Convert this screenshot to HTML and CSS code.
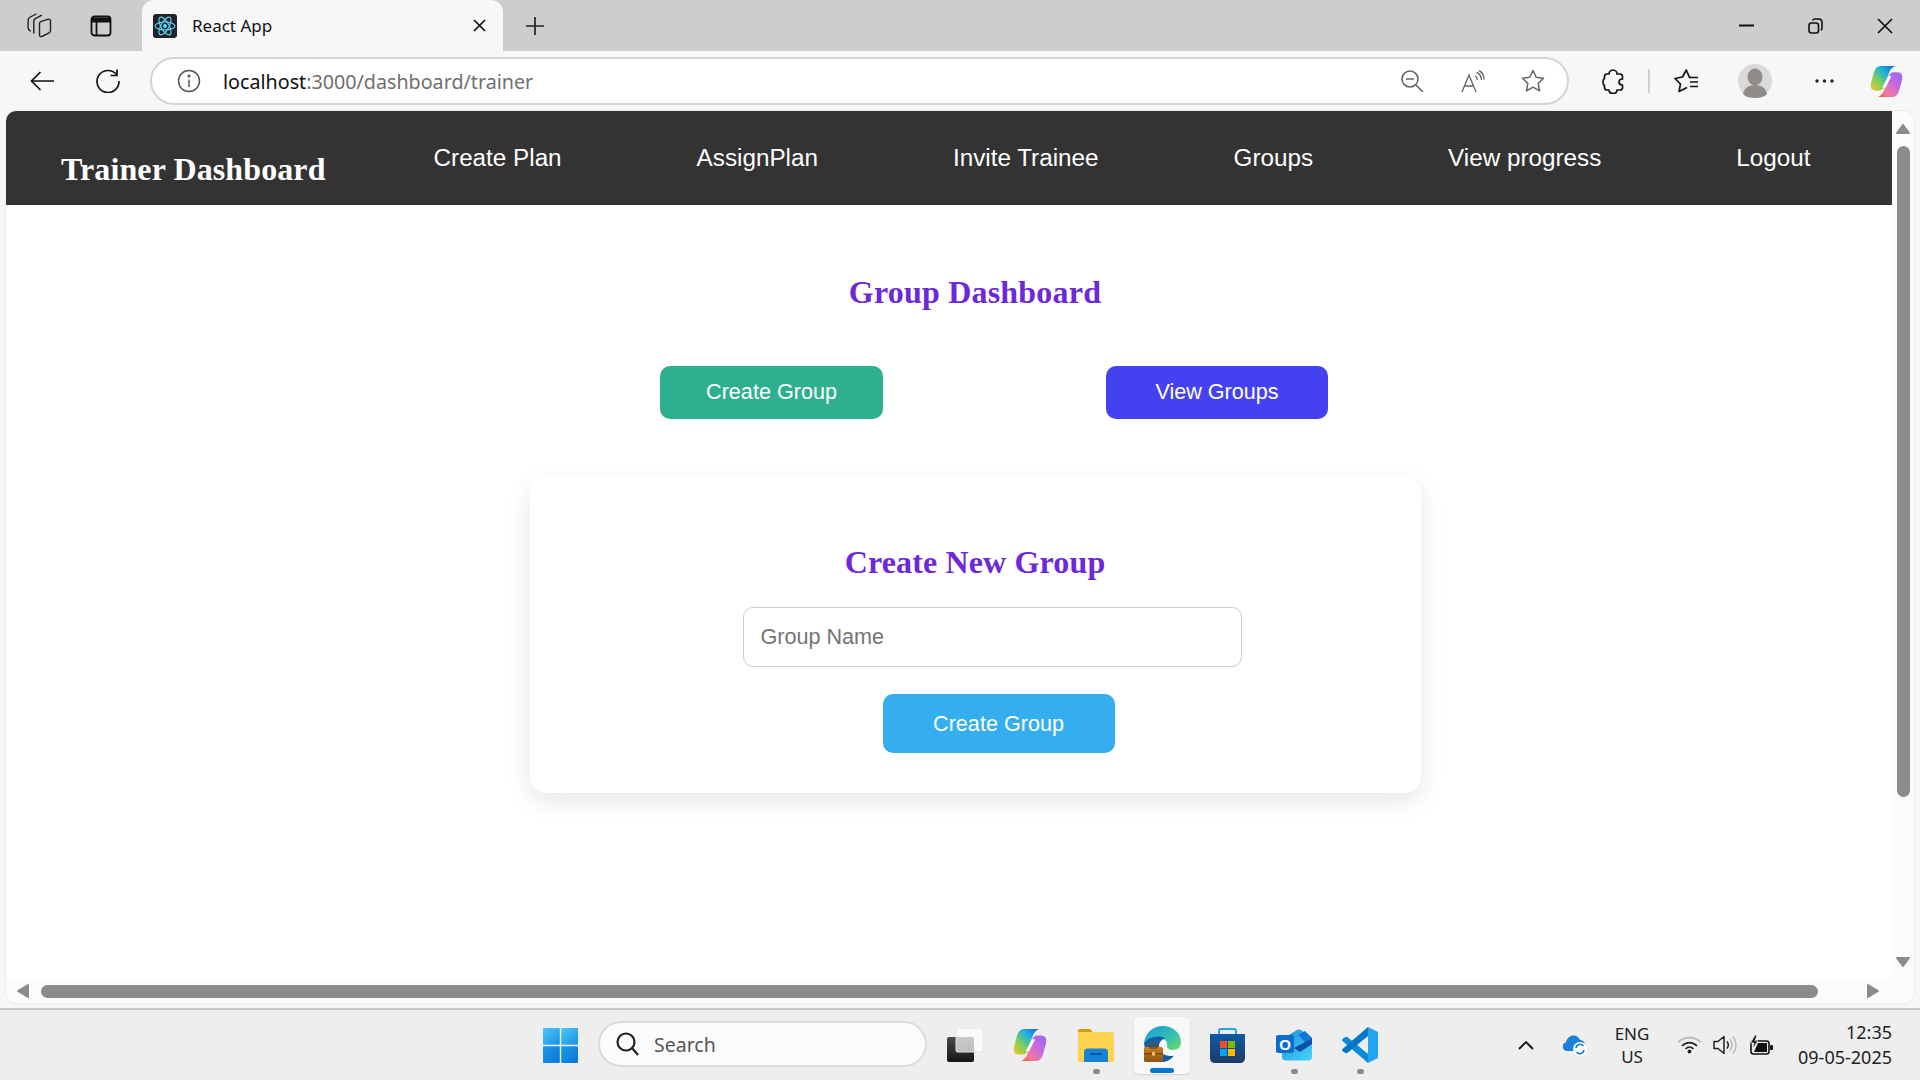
FILE: index.html
```html
<!DOCTYPE html>
<html lang="en">
<head>
<meta charset="utf-8">
<title>React App</title>
<link rel="stylesheet" href="styles.css">
</head>
<body>
<svg class="defs" width="0" height="0"><defs>
  <linearGradient id="c1" x1="1" y1="0" x2="0" y2="1"><stop offset="0" stop-color="#1a5fe8"/><stop offset=".35" stop-color="#1fb2dc"/><stop offset=".65" stop-color="#7fd05a"/><stop offset="1" stop-color="#f6c22a"/></linearGradient>
  <linearGradient id="c2" x1="1" y1="0" x2="0" y2="1"><stop offset="0" stop-color="#8f6cf2"/><stop offset=".4" stop-color="#c868e0"/><stop offset=".75" stop-color="#f27a9a"/><stop offset="1" stop-color="#f4552f"/></linearGradient>
  <linearGradient id="w1" x1="0" y1="0" x2="1" y2="1"><stop offset="0" stop-color="#4fc6f8"/><stop offset="1" stop-color="#1492e6"/></linearGradient>
  <linearGradient id="w2" x1="0" y1="0" x2="1" y2="1"><stop offset="0" stop-color="#1a9cea"/><stop offset="1" stop-color="#0a74d4"/></linearGradient>
  <linearGradient id="tv" x1="0" y1="0" x2="0" y2="1"><stop offset="0" stop-color="#4a4a4a"/><stop offset="1" stop-color="#161616"/></linearGradient>
  <linearGradient id="e1" x1="0" y1="0" x2="1" y2="1"><stop offset="0" stop-color="#1399d8"/><stop offset=".6" stop-color="#35c1b0"/><stop offset="1" stop-color="#6cdc5c"/></linearGradient>
  <linearGradient id="st" x1="0" y1="0" x2="0" y2="1"><stop offset="0" stop-color="#0f5aa2"/><stop offset="1" stop-color="#213a68"/></linearGradient>
  <linearGradient id="ol" x1="0" y1="0" x2="1" y2="1"><stop offset="0" stop-color="#1c8fe0"/><stop offset="1" stop-color="#45d4f8"/></linearGradient>
  <linearGradient id="br" x1="0" y1="0" x2="0" y2="1"><stop offset="0" stop-color="#c77f22"/><stop offset="1" stop-color="#8f5412"/></linearGradient>
</defs></svg>
<div class="screen">
  <header class="tabstrip">
    <div class="slot-tab">
      <svg width="25" height="25" viewBox="0 0 25 25" fill="none" stroke="#222" stroke-width="1.400" stroke-linejoin="round" stroke-linecap="round"><path d="M9 1L2.500 4.500C1.800 5 1.300 5.800 1.200 7L1 14c0 1.500.8 3 2.300 4"/><path d="M14.300 2.300L8 5.800C7.200 6.300 6.800 7 6.800 8v12"/><path d="M12.500 10.500c0-.8.500-1.500 1.300-1.800l7.500-2.500c1.100-.3 2.200.5 2.200 1.600v10c0 .9-.5 1.600-1.300 2L14.800 23.500c-1.100.5-2.300-.3-2.300-1.500z"/></svg>
    </div>
    <div class="slot-tab">
      <svg width="22" height="22" viewBox="0 0 22 22" fill="none" stroke="#111" stroke-width="1.800"><rect x="1.500" y="1.500" width="19" height="19" rx="3"/><path d="M1.500 5h19" stroke-width="5"/><path d="M6.500 7v13"/></svg>
    </div>
    <div class="tab">
      <svg class="favicon" width="24" height="24" viewBox="0 0 24 24"><rect width="24" height="24" rx="3" fill="#20232a"/><g fill="none" stroke="#61dafb" stroke-width="1.100"><ellipse cx="12" cy="12" rx="10" ry="4"/><ellipse cx="12" cy="12" rx="10" ry="4" transform="rotate(60 12 12)"/><ellipse cx="12" cy="12" rx="10" ry="4" transform="rotate(120 12 12)"/></g><circle cx="12" cy="12" r="2" fill="#61dafb"/></svg>
      <span class="tab-title">React App</span>
      <svg class="tab-close" width="13" height="13" viewBox="0 0 13 13" stroke="#111" stroke-width="1.700"><path d="M1 1l11 11M12 1L1 12"/></svg>
    </div>
    <div class="slot-plus">
      <svg width="20" height="20" viewBox="0 0 20 20" stroke="#222" stroke-width="1.700"><path d="M10 1v18M1 10h18"/></svg>
    </div>
    <div class="winctl">
      <div class="slot-win"><svg width="15" height="3" viewBox="0 0 15 3"><rect width="15" height="2" y=".5" fill="#111"/></svg></div>
      <div class="slot-win"><svg width="15" height="16" viewBox="0 0 15 16" fill="none" stroke="#111" stroke-width="1.600"><rect x="1" y="5" width="9.500" height="10" rx="2.500"/><path d="M4.500 2.500C5 1.500 6 1 7 1h3.500C12.500 1 14 2.500 14 4.500V10c0 1-.5 1.800-1.300 2.300"/></svg></div>
      <div class="slot-win"><svg width="16" height="16" viewBox="0 0 16 16" stroke="#111" stroke-width="1.700"><path d="M1 1l14 14M15 1L1 15"/></svg></div>
    </div>
  </header>

  <div class="toolbar">
    <div class="slot-nav">
      <svg width="24" height="20" viewBox="0 0 24 20" fill="none" stroke="#111" stroke-width="1.700"><path d="M24 10H1.500M10.500 1L1.500 10l9 9"/></svg>
    </div>
    <div class="slot-nav">
      <svg width="24" height="24" viewBox="0 0 24 24" fill="none" stroke="#111" stroke-width="1.700"><path d="M20.500 5.500A11 11 0 1 0 23 12"/><path d="M21 .5v6h-6.500"/></svg>
    </div>
    <div class="addressbar">
      <svg class="info" width="24" height="24" viewBox="0 0 24 24" fill="none" stroke="#555" stroke-width="1.500"><circle cx="12" cy="12" r="10.500"/><path d="M12 10.500V18"/><circle cx="12" cy="7" r=".8" fill="#555"/></svg>
      <span class="url"><span class="url-host">localhost</span>:3000/dashboard/trainer</span>
      <svg class="addr-zoom" width="23" height="22" viewBox="0 0 23 22" fill="none" stroke="#666" stroke-width="1.600"><circle cx="9" cy="9" r="8"/><path d="M5 9h8M15 15l7 7"/></svg>
      <svg class="addr-read" width="24" height="23" viewBox="0 0 24 23" fill="none" stroke="#666" stroke-width="1.400"><path d="M1 22L8 5l7 17M3.500 16h9"/><path d="M14 6c1.500.8 2.500 2.500 2.500 4M15.500 2.500c3 1.200 5 4 5 7.500M18 .5c3 1.500 5 5 5 9"/></svg>
      <svg class="addr-star" width="24" height="24" viewBox="0 0 24 24" fill="none" stroke="#666" stroke-width="1.500" stroke-linejoin="round"><path d="M12 1.500l3.200 6.800 7.300 1-5.300 5.100 1.300 7.400-6.500-3.600-6.500 3.600 1.300-7.400L1.500 9.300l7.300-1z"/></svg>
    </div>
    <svg class="tool-ext" width="22" height="25" viewBox="0 0 22 25" fill="none" stroke="#111" stroke-width="1.700" stroke-linejoin="round"><path d="M7 5C7 3 8.500 1 11 1c2.500 0 4 2 4 4h3c1.500 0 2.500 1 2.500 2.500V10c-2 0-3.500 1-3.500 3s1.500 3 3.500 3v2.500c0 1.500-1 2.500-2.500 2.500h-3c0 2-1.500 3.500-4 3.500S7 23 7 21H5c-1.500 0-2.500-1-2.500-2.500v-2C1.500 16 1 14.500 1 13s.5-3 1.500-3.500v-2C2.500 6 3.500 5 5 5z"/></svg>
    <span class="tool-sep"></span>
    <svg class="tool-fav" width="25" height="24" viewBox="0 0 25 24" fill="none" stroke="#111" stroke-width="1.700" stroke-linejoin="round"><path d="M17 8.500h-1.500L12.300 1 8.500 8 1 9.500 6.500 15 5 22.500 13 18.500"/><path d="M16 8.500h8M16 13h8M16 17.500h8"/></svg>
    <div class="avatar">
      <svg width="34" height="34" viewBox="0 0 34 34"><ellipse cx="17" cy="17" rx="17" ry="17" fill="#dcdad8"/><ellipse cx="17" cy="13" rx="7.500" ry="8.500" fill="#8f8c89"/><path d="M5 30c1-6 6-9 12-9s11 3 12 9c-3 3-7 4-12 4S8 33 5 30z" fill="#8f8c89"/></svg>
    </div>
    <svg class="tool-dots" width="19" height="4" viewBox="0 0 19 4" fill="#222"><circle cx="2" cy="2" r="1.700"/><circle cx="9.500" cy="2" r="1.700"/><circle cx="17" cy="2" r="1.700"/></svg>
    <svg class="tool-copilot" width="35" height="33" viewBox="0 0 36 36"><path d="M12 1C7 1 5 5 4 9L1 20c-1 5 1 8 5 8h4c3 0 5-2 6-5l5-15c1-3 3-5 6-7z" fill="url(#c1)"/><path d="M24 35c5 0 7-4 8-8l3-11c1-5-1-8-5-8h-4c-3 0-5 2-6 5l-5 15c-1 3-3 5-6 7z" fill="url(#c2)"/><path d="M20 12h3.500L17 24.500h-3.500z" fill="#fff"/></svg>
  </div>

  <div class="frame">
    <div class="content">
      <nav class="navbar">
        <h1 class="brand">Trainer Dashboard</h1>
        <ul class="navlinks">
          <li>Create Plan</li>
          <li>AssignPlan</li>
          <li>Invite Trainee</li>
          <li>Groups</li>
          <li>View progress</li>
          <li>Logout</li>
        </ul>
      </nav>
      <main class="dash">
        <h2 class="dash-title">Group Dashboard</h2>
        <div class="dash-actions">
          <button class="btn btn-green">Create Group</button>
          <button class="btn btn-indigo">View Groups</button>
        </div>
        <section class="card">
          <h3 class="card-title">Create New Group</h3>
          <input class="field" type="text" placeholder="Group Name">
          <button class="btn btn-sky">Create Group</button>
        </section>
      </main>
    </div>
    <div class="vbar">
      <svg width="14" height="10" viewBox="0 0 14 10" fill="#8b8b8b" stroke="#8b8b8b" stroke-width="2" stroke-linejoin="round"><path d="M7 1l6 8H1z"/></svg>
      <span class="vthumb"></span>
      <svg class="vdown" width="14" height="10" viewBox="0 0 14 10" fill="#8b8b8b" stroke="#8b8b8b" stroke-width="2" stroke-linejoin="round"><path d="M7 9L1 1h12z"/></svg>
    </div>
    <div class="hbar">
      <svg width="12" height="14" viewBox="0 0 12 14" fill="#8b8b8b" stroke="#8b8b8b" stroke-width="2" stroke-linejoin="round"><path d="M1 7l10-6v12z"/></svg>
      <span class="hthumb"></span>
      <svg class="hright" width="12" height="14" viewBox="0 0 12 14" fill="#8b8b8b" stroke="#8b8b8b" stroke-width="2" stroke-linejoin="round"><path d="M11 7L1 1v12z"/></svg>
    </div>
    <div class="corner"></div>
  </div>

  <footer class="taskbar">
    <svg class="tb-start" width="35" height="35" viewBox="0 0 35 35"><rect x="0" y="0" width="16.800" height="16.800" rx="1" fill="url(#w1)"/><rect x="18.200" y="0" width="16.800" height="16.800" rx="1" fill="url(#w1)"/><rect x="0" y="18.200" width="16.800" height="16.800" rx="1" fill="url(#w2)"/><rect x="18.200" y="18.200" width="16.800" height="16.800" rx="1" fill="url(#w2)"/></svg>
    <div class="tb-search">
      <svg width="23" height="24" viewBox="0 0 23 24" fill="none" stroke="#222" stroke-width="2.200"><circle cx="10" cy="10" r="8.500"/><path d="M16 16l6 7"/></svg>
      <span class="tb-search-text">Search</span>
    </div>
    <svg class="tb-view" width="36" height="34" viewBox="0 0 36 34"><rect x="0" y="9" width="27" height="25" rx="2" fill="url(#tv)"/><rect x="9" y="0" width="27" height="24" rx="1.500" fill="#fff" fill-opacity=".7" stroke="#e2e2e2"/></svg>
    <svg class="tb-copilot" width="36" height="34" viewBox="0 0 36 36"><path d="M12 1C7 1 5 5 4 9L1 20c-1 5 1 8 5 8h4c3 0 5-2 6-5l5-15c1-3 3-5 6-7z" fill="url(#c1)"/><path d="M24 35c5 0 7-4 8-8l3-11c1-5-1-8-5-8h-4c-3 0-5 2-6 5l-5 15c-1 3-3 5-6 7z" fill="url(#c2)"/><path d="M20 12h3.500L17 24.500h-3.500z" fill="#fff"/></svg>
    <div class="tb-item tb-files">
      <svg width="36" height="33" viewBox="0 0 36 33"><path d="M0 2C0 .8.800 0 2 0h9c1 0 1.500.4 2 1l2 2.500h-15z" fill="#d59b0a"/><rect x="0" y="3" width="36" height="30" rx="1.500" fill="#fdd34f"/><path d="M6 33V23c0-2 1.500-3.500 3.500-3.500h17c2 0 3.500 1.500 3.500 3.500v10z" fill="#1583d8"/><rect x="12" y="24" width="12" height="2" fill="#0c4f9a"/></svg>
      <span class="tb-dot"></span>
    </div>
    <div class="tb-active">
      <svg width="37" height="36" viewBox="0 0 37 36"><path d="M0 17C1 7 9 0 19 0c10 0 18 7 18 16 0 5-3 8-8 8-4 0-6-2-6-4 1-3-1-6-4-7-6-2-14 0-19 4z" fill="url(#e1)"/><path d="M0 17c3-4 9-7 15-6.500 3 .2 5 1 6 2-4 1-6 4-6 8 0 7 8 11 15 9-3 4-7 6.500-12 6.500C8 36 1 28 0 17z" fill="#0f5ea8"/><rect x="0" y="21" width="19" height="15" rx="1.500" fill="url(#br)"/><rect x="6" y="18" width="7" height="4" rx="1" fill="none" stroke="#7a4a10" stroke-width="1.500"/><rect x="0" y="27" width="19" height="1.500" fill="#7a4a10"/><rect x="8" y="26" width="3" height="3.500" fill="#f4c35a"/></svg>
      <span class="tb-ind"></span>
    </div>
    <div class="tb-item tb-store">
      <svg width="35" height="35" viewBox="0 0 35 35"><path d="M9 7V3c0-1.500 1-2 2-2h13c1 0 2 .500 2 2v4" fill="none" stroke="#27a4dc" stroke-width="2"/><path d="M0 6h35v24c0 3-2 5-5 5H5c-3 0-5-2-5-5z" fill="url(#st)"/><rect x="10" y="13" width="7" height="7" fill="#ee4f2b"/><rect x="18" y="13" width="7" height="7" fill="#7fb900"/><rect x="10" y="21" width="7" height="7" fill="#00a3ee"/><rect x="18" y="21" width="7" height="7" fill="#ffb900"/></svg>
    </div>
    <div class="tb-item tb-outlook">
      <svg width="36" height="32" viewBox="0 0 36 32"><path d="M6 10L21 1c1.300-.8 2.700-.8 4 0l11 8v19c0 2-1.500 3.500-3.500 3.500h-23C7.500 31.500 6 30 6 28z" fill="url(#ol)"/><path d="M18 19L36 9v6L24 23z" fill="#0f4fa8"/><path d="M22 6l7-4 7 7-7 4z" fill="#0f78d4"/><rect x="0" y="6" width="18" height="18" rx="2" fill="#0f6cc8"/><text class="tb-o" x="9" y="20.500" text-anchor="middle">O</text></svg>
      <span class="tb-dot"></span>
    </div>
    <div class="tb-item tb-code">
      <svg width="36" height="36" viewBox="0 0 36 36"><path d="M26 36V27L6 10.500C5 9.500 4 9.500 3 10.300L.8 11.800c-.8.600-1 1.700-.3 2.300z" fill="#0b8ad8"/><path d="M26 0v9L6 25.500C5 26.500 4 26.500 3 25.700L.8 24.200c-.8-.6-1-1.700-.3-2.300z" fill="#0078c6"/><path d="M26 0l10 5v26l-10 5z" fill="#22a5f1"/></svg>
      <span class="tb-dot"></span>
    </div>
    <div class="tray">
      <svg class="tr-chev" width="16" height="9" viewBox="0 0 16 9" fill="none" stroke="#111" stroke-width="1.800"><path d="M1 8l7-7 7 7"/></svg>
      <svg class="tr-cloud" width="25" height="21" viewBox="0 0 25 21"><path d="M5 16a4.500 4.500 0 0 1-1-8.800C5 3 8 .5 11.500.5c3 0 5.500 2 6.500 4.500 3 0 5 2.500 5 5 0 3-2.500 6-5 6z" fill="#1a80da"/><circle cx="18" cy="14" r="7" fill="#fff"/><path d="M14 13a4.200 4.200 0 0 1 7.500-2M22 15a4.200 4.200 0 0 1-7.500 2" fill="none" stroke="#0f78d4" stroke-width="1.500"/></svg>
      <div class="tr-lang"><span>ENG</span><span>US</span></div>
      <svg class="tr-wifi" width="25" height="18" viewBox="0 0 25 18" fill="none" stroke-width="1.600"><path d="M1 6.500C7.500 0 17.500 0 24 6.500" stroke="#bbb"/><path d="M5 10C9.500 5.500 15.500 5.500 20 10" stroke="#222"/><path d="M8.500 13c2.500-2.500 5.500-2.500 8 0" stroke="#222"/><circle cx="12.500" cy="15.500" r="1.900" fill="#222"/></svg>
      <svg class="tr-sound" width="24" height="20" viewBox="0 0 24 20" fill="none" stroke-width="1.500"><path d="M1 6.500h4L11 1.500v17L5 13.500H1z" stroke="#222" stroke-linejoin="round"/><path d="M14 6.500c1.500 2 1.500 5 0 7" stroke="#222"/><path d="M17 4c2.500 3.500 2.500 8.500 0 12" stroke="#bbb"/><path d="M20 1.500c4 5 4 12 0 17" stroke="#bbb"/></svg>
      <svg class="tr-batt" width="24" height="20" viewBox="0 0 24 20"><rect x="2" y="6" width="18" height="13" rx="2.500" fill="none" stroke="#111" stroke-width="1.600"/><path d="M5 17l4-9h9v9z" fill="#111"/><rect x="21" y="10" width="3" height="5" rx="1" fill="#111"/><path d="M6 0L1.500 8H5L3.500 14 9 6H6L8 0z" fill="#111" stroke="#eee" stroke-width=".8"/></svg>
      <div class="tr-clock"><span>12:35</span><span>09-05-2025</span></div>
    </div>
  </footer>
</div>
</body>
</html>
```
FILE: styles.css
```css
* { box-sizing: border-box; }
html, body { margin: 0; padding: 0; height: 100%; overflow: hidden; }
body { font-family: "Liberation Sans", Arial, sans-serif; background: #f7f7f7; }
.defs { display: block; height: 0; }
.screen { width: 1920px; height: 1080px; display: flex; flex-direction: column; }

.tabstrip { height: 51px; background: #cdcdcd; display: flex; align-items: center; padding-left: 8px; flex: none; }
.slot-tab { width: 62px; display: flex; justify-content: center; }
.tab { width: 361px; height: 51px; margin-left: 10px; background: #f7f7f7; border-radius: 12px 12px 0 0; display: flex; align-items: center; padding-left: 11px; }
.tab-title { font-family: "Noto Sans", sans-serif; font-size: 17px; color: #111; margin-left: 15px; }
.tab-close { margin-left: auto; margin-right: 17px; }
.slot-plus { width: 64px; display: flex; justify-content: center; }
.winctl { margin-left: auto; display: flex; margin-right: 1px; }
.slot-win { width: 69px; display: flex; justify-content: center; align-items: center; }

.toolbar { height: 60px; background: #f7f7f7; display: flex; align-items: center; padding-left: 9px; flex: none; }
.slot-nav { width: 66px; display: flex; justify-content: center; }
.addressbar { width: 1419px; height: 48px; margin-left: 9px; background: #fff; border: 2px solid #d4d4d4; border-radius: 24px; display: flex; align-items: center; padding-left: 25px; }
.url { font-family: "Noto Sans", sans-serif; font-size: 19.700px; color: #6f6f6f; margin-left: 22px; }
.url-host { color: #111; }
.addr-zoom { margin-left: auto; }
.addr-read { margin-left: 37px; }
.addr-star { margin-left: 36px; margin-right: 22px; }
.tool-ext { margin-left: 33px; }
.tool-sep { width: 2px; height: 24px; background: #cfcfcf; margin-left: 24px; }
.tool-fav { margin-left: 24px; }
.avatar { margin-left: 39px; height: 34px; }
.tool-dots { margin-left: 43px; }
.tool-copilot { margin-left: 35px; }

.frame { width: 1908px; height: 892px; margin-left: 6px; display: grid; grid-template-columns: 1886px 22px; grid-template-rows: 868px 24px; background: #fbfbfb; border-radius: 10px; overflow: hidden; flex: none; box-shadow: 0 0 0 1px #ececec; }
.content { background: #fff; overflow: hidden; }
.navbar { width: 1938px; height: 94px; background: #333; display: flex; align-items: flex-start; padding-left: 55px; }
.brand { margin: 40px 0 0; font-family: "Liberation Serif", serif; font-size: 32px; letter-spacing: .1px; font-weight: 700; line-height: 36px; color: #fff; }
.navlinks { list-style: none; margin: 33px 0 0 108px; padding: 0; display: flex; gap: 135px; color: #fff; font-size: 24.250px; line-height: 28px; }

.dash { width: 1938px; display: flex; flex-direction: column; align-items: center; }
.dash-title { margin: 70px 0 0; font-family: "Liberation Serif", serif; font-size: 32px; letter-spacing: .2px; line-height: 34px; font-weight: 700; color: #6d28d9; }
.dash-actions { display: flex; gap: 223px; margin: 57px 0 0 38px; }
.btn { border: 0; border-radius: 10px; color: #fff; font-family: "Liberation Sans", Arial, sans-serif; font-size: 21.600px; display: block; }
.btn-green { width: 223px; height: 53px; padding-bottom: 3px; background: #2eb08f; }
.btn-indigo { width: 222px; height: 53px; padding-bottom: 3px; background: #4441f0; }
.card { width: 891px; height: 317px; margin-top: 57px; background: #fff; border-radius: 16px; box-shadow: 0 8px 24px rgba(0,0,0,.1); padding-top: 69px; display: flex; flex-direction: column; align-items: flex-start; }
.card-title { margin: 0; align-self: center; font-family: "Liberation Serif", serif; font-size: 32px; letter-spacing: .15px; line-height: 34px; font-weight: 700; color: #6d28d9; }
.field { width: 499px; height: 60px; margin: 28px 0 0 213px; border: 1px solid #ccc; border-radius: 10px; padding: 0 17px; font-family: "Liberation Sans", Arial, sans-serif; font-size: 21.600px; background: #fff; }
.field::placeholder { color: #757575; opacity: 1; }
.btn-sky { width: 232px; height: 59px; margin: 27px 0 0 353px; background: #35aeef; }

.vbar { background: #fbfbfb; display: flex; flex-direction: column; align-items: center; padding: 13px 0 12px; }
.vthumb { width: 13px; height: 651px; margin-top: 12px; background: #8b8b8b; border-radius: 7px; }
.vdown { margin-top: auto; }
.hbar { background: #fbfbfb; display: flex; align-items: center; padding: 0 13px 0 11px; }
.hthumb { width: 1777px; height: 13px; margin-left: 12px; background: #8b8b8b; border-radius: 7px; }
.hright { margin-left: auto; }
.corner { background: #fbfbfb; }

.taskbar { height: 72px; margin-top: 5px; background: #eee; border-top: 2px solid #c6c6c6; display: flex; align-items: center; padding-left: 543px; padding-right: 28px; flex: none; position: relative; }
.tb-search { width: 329px; height: 46px; margin-left: 20px; margin-bottom: 2px; background: #fbfbfb; border: 2px solid #dcdcdc; border-radius: 23px; display: flex; align-items: center; padding-left: 16px; }
.tb-search-text { font-family: "Noto Sans", sans-serif; font-size: 19.500px; color: #555; margin-left: 15px; }
.tb-view { margin-left: 20px; }
.tb-copilot { margin-left: 29px; }
.tb-item { position: relative; height: 36px; display: flex; align-items: center; }
.tb-files { margin-left: 30px; }
.tb-active { position: relative; width: 56px; height: 57px; margin-left: 20px; background: #f8f8f8; border-radius: 5px; box-shadow: 0 1px 2px rgba(0,0,0,.12); display: flex; justify-content: center; padding-top: 9px; }
.tb-store { margin-left: 20px; }
.tb-outlook { margin-left: 31px; }
.tb-code { margin-left: 30px; }
.tb-dot { position: absolute; left: 50%; top: 42px; width: 7px; height: 5px; margin-left: -3px; border-radius: 3px; background: #8a8a8a; }
.tb-ind { position: absolute; left: 16px; bottom: 1px; width: 24px; height: 5px; border-radius: 3px; background: #0078d4; }
.tb-o { font-family: "Liberation Sans", sans-serif; font-size: 15px; font-weight: 700; fill: #fff; }
.tray { margin-left: auto; display: flex; align-items: center; }
.tr-cloud { margin-left: 28px; }
.tr-lang { width: 36px; margin-left: 27px; display: flex; flex-direction: column; align-items: center; font-family: "Noto Sans", sans-serif; font-size: 17px; line-height: 23px; color: #222; }
.tr-wifi { margin-left: 27px; }
.tr-sound { margin-left: 11px; }
.tr-batt { margin-left: 12px; }
.tr-clock { margin-left: 25px; margin-top: -1px; display: flex; flex-direction: column; align-items: flex-end; font-family: "Noto Sans", sans-serif; font-size: 18px; line-height: 25px; color: #222; }
```
